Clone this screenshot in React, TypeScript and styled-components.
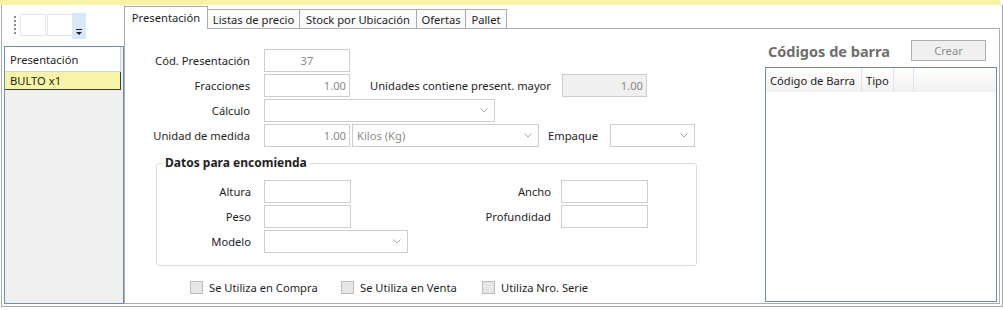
import React from "react";
import styled, { createGlobalStyle } from "styled-components";

const GlobalStyle = createGlobalStyle`
  html, body {
    margin: 0;
    padding: 0;
    background: #ffffff;
  }
  body {
    font-family: "Noto Sans", "DejaVu Sans", sans-serif;
    font-size: 11.2px;
    color: #1e1e1e;
  }
`;

const Root = styled.div`
  width: 1003px;
  height: 310px;
  background: #ffffff;
  overflow: hidden;
`;

const TopBar = styled.div`
  width: 1000px;
  height: 5px;
  background: #f7f3a6;
`;

const Frame = styled.div`
  display: flex;
  width: 1000px;
  height: 301px;
  margin-left: 1px;
  border: 1px solid #a9a9a9;
  border-top: none;
`;

const LeftPane = styled.div`
  display: flex;
  flex-direction: column;
  width: 122px;
  flex: none;
`;

const Toolbar = styled.div`
  display: flex;
  align-items: flex-start;
  height: 41px;
  padding: 8px 0 0 12px;
  box-sizing: border-box;
`;

const Grip = styled.span`
  width: 2px;
  height: 18px;
  margin: 3px 4px 0 0;
  background: repeating-linear-gradient(to bottom, #8c8c8c 0 2px, transparent 2px 4px);
`;

const ToolBox = styled.span`
  width: 26px;
  height: 22px;
  margin-top: 1px;
  margin-right: 1px;
  border: 1px solid #e6e6e6;
  box-sizing: border-box;
  background: #ffffff;
`;

const OverflowButton = styled.span`
  display: flex;
  align-items: flex-end;
  justify-content: center;
  width: 14px;
  height: 26px;
  margin-left: -2px;
  padding-bottom: 4px;
  box-sizing: border-box;
  background: #d9e8f8;
`;

const ListBox = styled.div`
  display: flex;
  flex-direction: column;
  flex: 1;
  margin: 0 0 2px 2px;
  border: 1px solid #6a8db5;
  background: #efefef;
`;

const ListHeader = styled.div`
  display: flex;
  align-items: center;
  height: 24px;
  padding-left: 5px;
  background: #ffffff;
  border-bottom: 1px solid #d5d5d5;
  border-right: 1px solid #d5d5d5;
  margin-right: 2px;
`;

const ListRow = styled.div<{ $selected?: boolean }>`
  display: flex;
  align-items: center;
  height: 17px;
  padding-left: 5px;
  margin-right: 2px;
  background: ${(p) => (p.$selected ? "#f6f4a6" : "#ffffff")};
  border-bottom: 1px solid #3c3c3c;
  border-right: 1px solid #3c3c3c;
`;

const TabControl = styled.div`
  display: flex;
  flex-direction: column;
  width: 876px;
  flex: none;
`;

const TabStrip = styled.div`
  display: flex;
  align-items: flex-end;
  height: 23px;
`;

const Tab = styled.div<{ $active?: boolean; $w: number }>`
  position: relative;
  display: flex;
  align-items: center;
  justify-content: center;
  width: ${(p) => p.$w}px;
  height: ${(p) => (p.$active ? 23 : 19)}px;
  margin-bottom: ${(p) => (p.$active ? -1 : 0)}px;
  margin-left: -1px;
  box-sizing: border-box;
  border: 1px solid #acacac;
  border-bottom: none;
  background: ${(p) => (p.$active ? "#ffffff" : "#fafafa")};
  z-index: ${(p) => (p.$active ? 2 : 1)};
  white-space: nowrap;
  padding-bottom: ${(p) => (p.$active ? 1 : 0)}px;

  &:first-child {
    margin-left: 0;
  }
`;

const TabPanel = styled.div`
  display: flex;
  height: 276px;
  box-sizing: border-box;
  border: 1px solid #acacac;
  background: #ffffff;
`;

const FormColumn = styled.div`
  display: flex;
  flex-direction: column;
  flex: 1;
  padding-top: 20px;
`;

const FieldRow = styled.div`
  display: flex;
  align-items: center;
  height: 23px;
  margin-bottom: 2px;
`;

const FieldLabel = styled.span<{ $w: number; $gap: number }>`
  width: ${(p) => p.$w}px;
  margin-right: ${(p) => p.$gap}px;
  flex: none;
  text-align: right;
  white-space: nowrap;
`;

const TextBox = styled.div<{ $w: number; $align?: string; $disabled?: boolean }>`
  display: flex;
  align-items: center;
  justify-content: ${(p) => p.$align || "flex-start"};
  width: ${(p) => p.$w}px;
  height: 23px;
  flex: none;
  box-sizing: border-box;
  padding: 0 3px;
  border: 1px solid #cdcdcd;
  background: ${(p) => (p.$disabled ? "#f0f0f0" : "#ffffff")};
  color: #8a8a8a;
`;

const ComboBox = styled.div<{ $w: number; $ml?: number }>`
  display: flex;
  align-items: center;
  justify-content: space-between;
  width: ${(p) => p.$w}px;
  height: 23px;
  flex: none;
  margin-left: ${(p) => p.$ml || 0}px;
  box-sizing: border-box;
  padding: 0 6px 0 4px;
  border: 1px solid #cdcdcd;
  background: #ffffff;
  color: #8a8a8a;
`;

const Group = styled.fieldset`
  width: 541px;
  margin: 6px 0 0 31px;
  padding: 9px 0 12px 0;
  box-sizing: border-box;
  border: 1px solid #d5dfe5;
  border-radius: 3px;
`;

const GroupLegend = styled.legend`
  margin-left: 6px;
  padding: 0 2px;
  font-size: 12px;
  font-weight: bold;
  line-height: 16px;
  color: #1e1e1e;
`;

const GroupRow = styled(FieldRow)`
  &:last-child {
    margin-bottom: 0;
  }
`;

const CheckRow = styled.div`
  display: flex;
  align-items: center;
  height: 15px;
  margin-top: 14px;
  padding-left: 65px;
`;

const CheckItem = styled.label<{ $w?: number }>`
  display: flex;
  align-items: center;
  width: ${(p) => (p.$w ? `${p.$w}px` : "auto")};
  flex: none;
  white-space: nowrap;
`;

const CheckBox = styled.span`
  width: 13px;
  height: 13px;
  margin-right: 6px;
  box-sizing: border-box;
  border: 1px solid #bcbcbc;
  background: #e6e6e6;
`;

const CodesColumn = styled.div`
  display: flex;
  flex-direction: column;
  width: 232px;
  flex: none;
  margin-right: 2px;
  padding: 11px 0 1px;
`;

const CodesHeader = styled.div`
  display: flex;
  align-items: center;
  justify-content: space-between;
  height: 21px;
  padding: 0 11px 0 3px;
`;

const CodesTitle = styled.span`
  font-size: 14.5px;
  font-weight: bold;
  color: #6d6d6d;
  white-space: nowrap;
`;

const CreateButton = styled.span`
  display: flex;
  align-items: center;
  justify-content: center;
  width: 75px;
  height: 21px;
  box-sizing: border-box;
  border: 1px solid #adadad;
  background: #f0f0f0;
  color: #8d8d8d;
`;

const CodesGrid = styled.div`
  flex: 1;
  margin-top: 6px;
  border: 1px solid #6a8db5;
  background: #ffffff;
`;

const GridHeader = styled.div`
  display: flex;
  height: 24px;
  background: linear-gradient(to bottom, #ffffff, #f1f1f1);
`;

const HeaderCell = styled.div<{ $w?: number }>`
  display: flex;
  align-items: center;
  width: ${(p) => (p.$w ? `${p.$w}px` : "auto")};
  flex: ${(p) => (p.$w ? "none" : "1")};
  padding-left: 4px;
  box-sizing: border-box;
  border-right: ${(p) => (p.$w ? "1px solid #e3e3e3" : "none")};
  white-space: nowrap;
`;

const Chevron = () => (
  <svg width="8" height="5" viewBox="0 0 8 5">
    <polyline points="0.5,0.5 4,4 7.5,0.5" fill="none" stroke="#a8a8a8" strokeWidth="1" />
  </svg>
);

const OverflowGlyph = () => (
  <svg width="6" height="6" viewBox="0 0 6 6">
    <rect x="0" y="0" width="6" height="1" fill="#1e1e1e" />
    <polygon points="0,3 6,3 3,6" fill="#1e1e1e" />
  </svg>
);

const tabs = [
  { label: "Presentación", w: 84, active: true },
  { label: "Listas de precio", w: 93 },
  { label: "Stock por Ubicación", w: 118 },
  { label: "Ofertas", w: 50 },
  { label: "Pallet", w: 42 },
];

const App = () => {
  return (
    <Root>
      <GlobalStyle />
      <TopBar />
      <Frame>
        <LeftPane>
          <Toolbar>
            <Grip />
            <ToolBox />
            <ToolBox />
            <OverflowButton>
              <OverflowGlyph />
            </OverflowButton>
          </Toolbar>
          <ListBox>
            <ListHeader>Presentación</ListHeader>
            <ListRow $selected>BULTO x1</ListRow>
          </ListBox>
        </LeftPane>

        <TabControl>
          <TabStrip>
            {tabs.map((t) => (
              <Tab key={t.label} $active={t.active} $w={t.w}>
                {t.label}
              </Tab>
            ))}
          </TabStrip>
          <TabPanel>
            <FormColumn>
              <FieldRow>
                <FieldLabel $w={125} $gap={14}>Cód. Presentación</FieldLabel>
                <TextBox $w={86} $align="center">37</TextBox>
              </FieldRow>
              <FieldRow>
                <FieldLabel $w={125} $gap={14}>Fracciones</FieldLabel>
                <TextBox $w={86} $align="flex-end">1.00</TextBox>
                <FieldLabel $w={201} $gap={11}>Unidades contiene present. mayor</FieldLabel>
                <TextBox $w={85} $align="flex-end" $disabled>1.00</TextBox>
              </FieldRow>
              <FieldRow>
                <FieldLabel $w={125} $gap={14}>Cálculo</FieldLabel>
                <ComboBox $w={231}>
                  <span />
                  <Chevron />
                </ComboBox>
              </FieldRow>
              <FieldRow>
                <FieldLabel $w={125} $gap={14}>Unidad de medida</FieldLabel>
                <TextBox $w={86} $align="flex-end">1.00</TextBox>
                <ComboBox $w={187} $ml={2}>
                  <span>Kilos (Kg)</span>
                  <Chevron />
                </ComboBox>
                <FieldLabel $w={59} $gap={12}>Empaque</FieldLabel>
                <ComboBox $w={85}>
                  <span />
                  <Chevron />
                </ComboBox>
              </FieldRow>

              <Group>
                <GroupLegend>Datos para encomienda</GroupLegend>
                <GroupRow>
                  <FieldLabel $w={94} $gap={13}>Altura</FieldLabel>
                  <TextBox $w={87} />
                  <FieldLabel $w={200} $gap={10}>Ancho</FieldLabel>
                  <TextBox $w={87} />
                </GroupRow>
                <GroupRow>
                  <FieldLabel $w={94} $gap={13}>Peso</FieldLabel>
                  <TextBox $w={87} />
                  <FieldLabel $w={200} $gap={10}>Profundidad</FieldLabel>
                  <TextBox $w={87} />
                </GroupRow>
                <GroupRow>
                  <FieldLabel $w={94} $gap={13}>Modelo</FieldLabel>
                  <ComboBox $w={144}>
                    <span />
                    <Chevron />
                  </ComboBox>
                </GroupRow>
              </Group>

              <CheckRow>
                <CheckItem $w={151}>
                  <CheckBox />
                  Se Utiliza en Compra
                </CheckItem>
                <CheckItem $w={141}>
                  <CheckBox />
                  Se Utiliza en Venta
                </CheckItem>
                <CheckItem>
                  <CheckBox />
                  Utiliza Nro. Serie
                </CheckItem>
              </CheckRow>
            </FormColumn>

            <CodesColumn>
              <CodesHeader>
                <CodesTitle>Códigos de barra</CodesTitle>
                <CreateButton>Crear</CreateButton>
              </CodesHeader>
              <CodesGrid>
                <GridHeader>
                  <HeaderCell $w={96}>Código de Barra</HeaderCell>
                  <HeaderCell $w={32}>Tipo</HeaderCell>
                  <HeaderCell $w={20} />
                  <HeaderCell />
                </GridHeader>
              </CodesGrid>
            </CodesColumn>
          </TabPanel>
        </TabControl>
      </Frame>
    </Root>
  );
};

export default App;
